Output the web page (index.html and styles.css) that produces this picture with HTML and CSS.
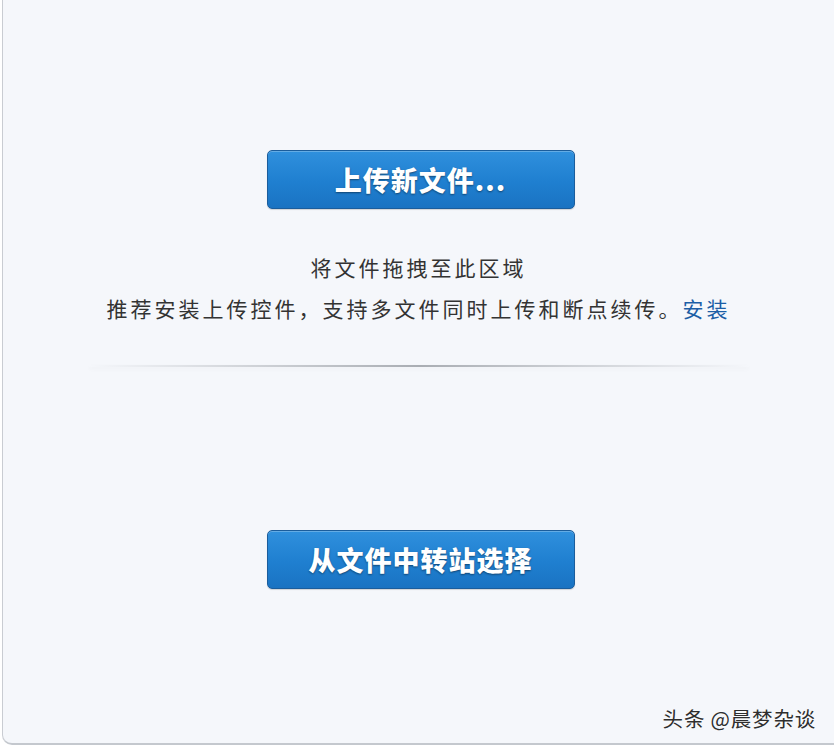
FILE: index.html
```html
<!DOCTYPE html>
<html lang="zh">
<head>
<meta charset="utf-8">
<link rel="stylesheet" href="styles.css">
</head>
<body>
<div class="frame">
  <div class="upload">
    <button class="btn btn-first">上传新文件...</button>
    <p class="hint">将文件拖拽至此区域</p>
    <p class="hint hint-2">推荐安装上传控件，支持多文件同时上传和断点续传。<a class="link">安装</a></p>
    <div class="divider"></div>
    <button class="btn btn-second">从文件中转站选择</button>
  </div>
  <div class="watermark">头条 @晨梦杂谈</div>
</div>
</body>
</html>
```
FILE: styles.css
```css
html, body {
  margin: 0;
  padding: 0;
  background: #ffffff;
}
body {
  width: 834px;
  height: 748px;
  overflow: hidden;
  font-family: "Noto Sans CJK SC", "Noto Sans", sans-serif;
}
.frame {
  position: relative;
  margin-left: 2px;
  width: 832px;
  height: 745px;
  box-sizing: border-box;
  border-left: 1px solid #c9ccd2;
  border-bottom: 2px solid #c4c8ce;
  border-bottom-left-radius: 10px;
  background: #f5f7fb;
}
.upload {
  display: flex;
  flex-direction: column;
  align-items: center;
  padding-top: 150px;
}
.btn {
  width: 308px;
  height: 59px;
  border: 1px solid #1b5d9c;
  border-radius: 5px;
  background: linear-gradient(#2f90dd, #1f7fd0 55%, #1a73c2);
  box-shadow: inset 0 1px 0 rgba(255,255,255,0.25), 0 1px 1px rgba(0,0,0,0.15);
  color: #ffffff;
  font-family: "Noto Sans CJK SC", sans-serif;
  font-size: 27px;
  font-weight: 900;
  letter-spacing: 1px;
  text-shadow: 0 1px 2px rgba(0,0,0,0.45);
  padding: 0;
  cursor: pointer;
  margin-left: 4px;
}
.hint {
  margin: 0;
  color: #333333;
  font-size: 21px;
  letter-spacing: 3px;
  line-height: 41px;
}
.btn-first + .hint {
  margin-top: 38px;
}
.link {
  color: #1c5ea6;
}
.divider {
  margin-top: 36px;
  width: 660px;
  height: 2px;
  background: linear-gradient(90deg, rgba(180,184,190,0), #a9adb3 50%, rgba(180,184,190,0));
  box-shadow: 0 2px 4px rgba(0,0,0,0.04);
}
.btn-second {
  margin-top: 163px;
}
.watermark {
  position: absolute;
  right: 18px;
  bottom: 10px;
  font-size: 20.5px;
  color: #2e2e2e;
  letter-spacing: 0.8px;
  text-shadow: 0 0 2px #ffffff;
}
```
